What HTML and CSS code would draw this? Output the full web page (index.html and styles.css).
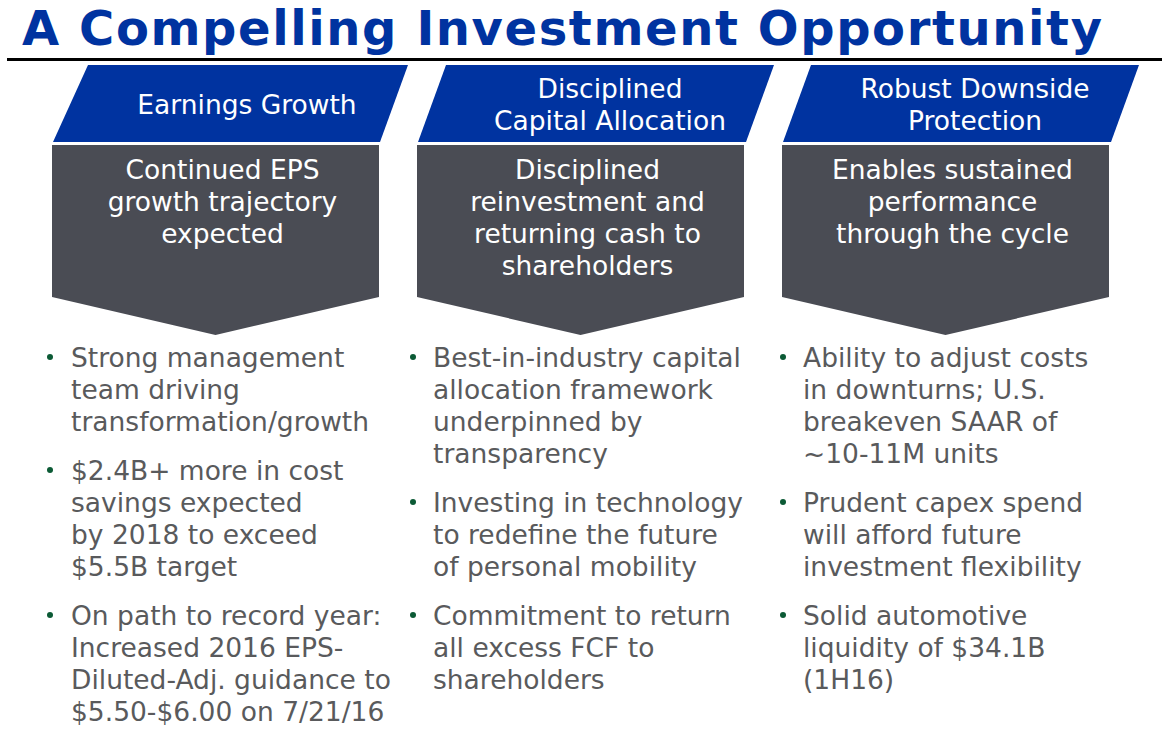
FILE: index.html
```html
<!DOCTYPE html>
<html lang="en">
<head>
<meta charset="utf-8">
<title>A Compelling Investment Opportunity</title>
<link rel="stylesheet" href="styles.css">
</head>
<body>
<div class="slide">
  <h1 class="title">A Compelling Investment Opportunity</h1>
  <div class="rule"></div>
  <div class="columns">
    <section class="col">
      <div class="head head--first"><span>Earnings Growth</span></div>
      <div class="chev">Continued EPS<br>growth trajectory<br>expected</div>
      <ul class="points points--a">
        <li>Strong management<br>team driving<br>transformation/growth</li>
        <li>$2.4B+ more in cost<br>savings expected<br>by 2018 to exceed<br>$5.5B target</li>
        <li>On path to record year:<br>Increased 2016 EPS-<br>Diluted-Adj. guidance to<br>$5.50-$6.00 on 7/21/16</li>
      </ul>
    </section>
    <section class="col">
      <div class="head"><span>Disciplined<br>Capital Allocation</span></div>
      <div class="chev">Disciplined<br>reinvestment and<br>returning cash to<br>shareholders</div>
      <ul class="points points--b">
        <li>Best-in-industry capital<br>allocation framework<br>underpinned by<br>transparency</li>
        <li>Investing in technology<br>to redefine the future<br>of personal mobility</li>
        <li>Commitment to return<br>all excess FCF to<br>shareholders</li>
      </ul>
    </section>
    <section class="col">
      <div class="head"><span>Robust Downside<br>Protection</span></div>
      <div class="chev">Enables sustained<br>performance<br>through the cycle</div>
      <ul class="points points--c">
        <li>Ability to adjust costs<br>in downturns; U.S.<br>breakeven SAAR of<br>~10-11M units</li>
        <li>Prudent capex spend<br>will afford future<br>investment flexibility</li>
        <li>Solid automotive<br>liquidity of $34.1B<br>(1H16)</li>
      </ul>
    </section>
  </div>
</div>
</body>
</html>
```

FILE: styles.css
```css
html, body {
  margin: 0;
  padding: 0;
  background: #ffffff;
}

body {
  font-family: "DejaVu Sans", Verdana, sans-serif;
}

.slide {
  width: 1172px;
  height: 739px;
}

.title {
  margin: 0;
  padding-left: 22px;
  font-size: 48px;
  letter-spacing: 1.6px;
  line-height: 56px;
  font-weight: bold;
  color: #0033a0;
  white-space: nowrap;
}

.rule {
  height: 3px;
  margin: 2px 10px 0 7px;
  background: #000000;
}

.columns {
  display: grid;
  grid-template-columns: repeat(3, 327px);
  column-gap: 38px;
  padding-left: 52px;
  margin-top: 4px;
}

.col {
  display: flex;
  flex-direction: column;
}

.head {
  width: 358px;
  height: 77px;
  box-sizing: border-box;
  padding: 3px 0 0 28px;
  background: #0033a0;
  clip-path: polygon(29px 0, 357px 0, 329px 77px, 1px 77px);
  display: flex;
  align-items: center;
  justify-content: center;
  color: #ffffff;
  font-size: 26.5px;
  line-height: 32px;
  text-align: center;
  white-space: nowrap;
}

.head--first {
  padding-left: 32px;
  clip-path: polygon(36px 0, 356px 0, 328px 77px, 1px 77px);
}

.chev {
  width: 327px;
  height: 190px;
  margin-top: 3px;
  box-sizing: border-box;
  padding: 9px 0 0 14px;
  background: #4a4c54;
  clip-path: polygon(0 0, 100% 0, 100% 152px, 50% 190px, 0 152px);
  color: #ffffff;
  font-size: 26.5px;
  line-height: 32px;
  text-align: center;
  white-space: nowrap;
}

.points {
  list-style: none;
  margin: 7px 0 0;
  padding: 0;
  color: #595a5c;
  font-size: 26.5px;
  line-height: 32px;
  white-space: nowrap;
}

.points li {
  position: relative;
  padding-left: 19px;
  margin-bottom: 17px;
}

.points li::before {
  content: "";
  position: absolute;
  left: -5px;
  top: 12px;
  width: 6px;
  height: 6px;
  border-radius: 50%;
  background: #0b5a35;
}

.points--b li {
  padding-left: 16px;
}

.points--b li::before {
  left: -7px;
}

.points--c li {
  padding-left: 21px;
}

.points--c li::before {
  left: -2px;
}
```
